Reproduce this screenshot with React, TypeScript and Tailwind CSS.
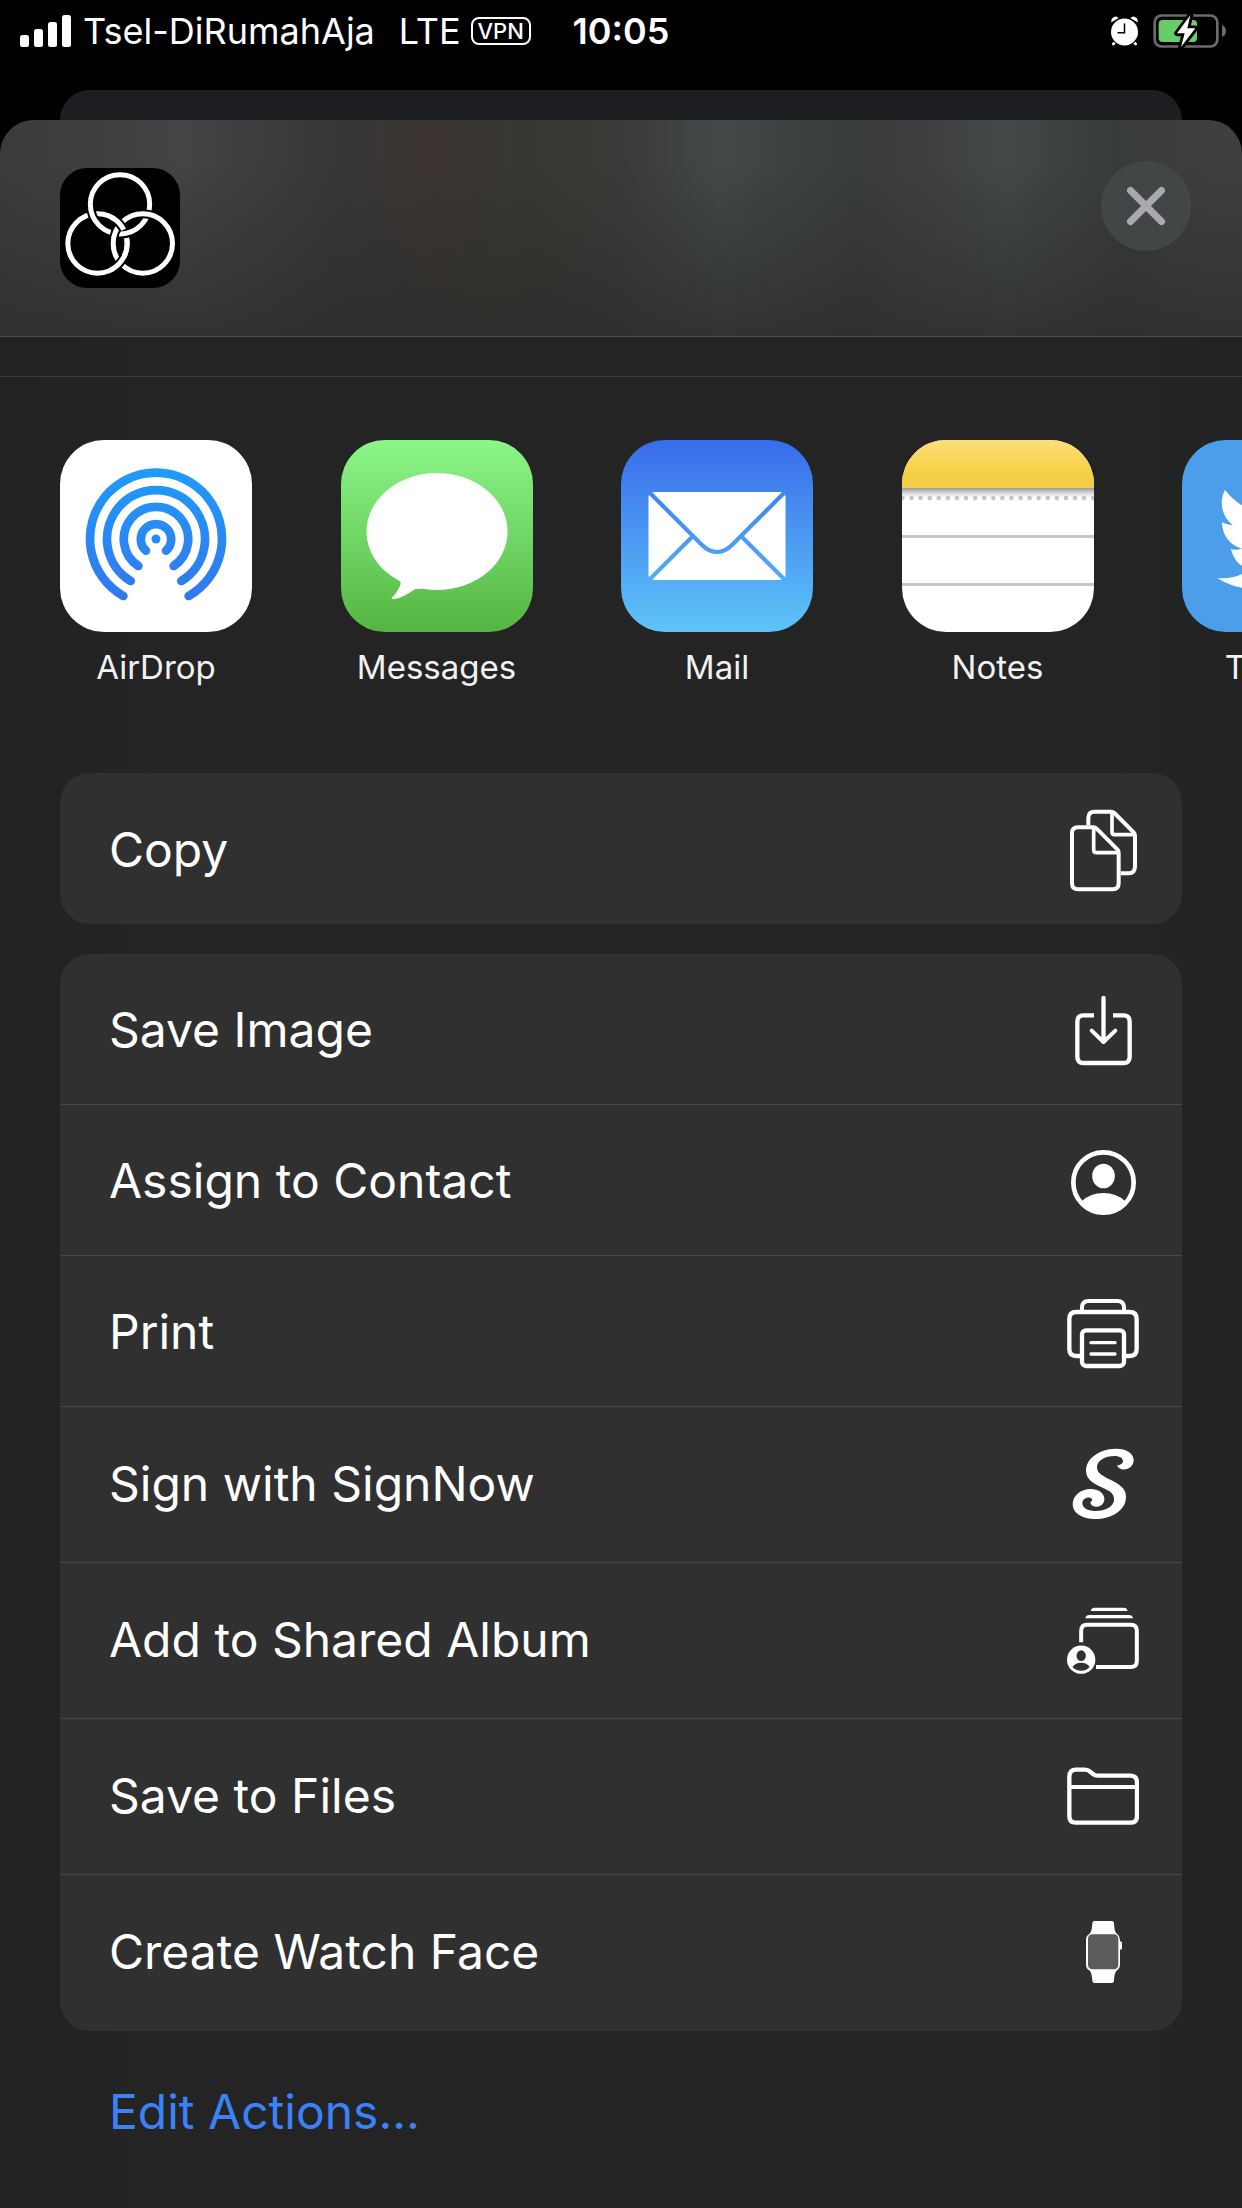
import React from "react";

type IconProps = { y: number; children: React.ReactNode };

/* Line icons share one 72×90 frame, drawn at three units per pixel. */
function ActionIcon({ y, children }: IconProps) {
  return (
    <svg
      className="h-[90px] w-[72px] shrink-0"
      viewBox={`81 ${y} 216 270`}
      fill="none"
      stroke="#fff"
      strokeWidth={12}
      strokeLinecap="round"
      strokeLinejoin="round"
      aria-hidden="true"
    >
      {children}
    </svg>
  );
}

const CopyIcon = () => (
  <ActionIcon y={43}>
    <path d="M145 104V82q0-19 19-19H213q6 0 10 4l58 58q4 4 4 10v92q0 21-19 21H242" strokeLinecap="butt" />
    <path d="M216 66v58q0 8 8 8h58" strokeWidth={11} />
    <path d="M96 128q0-18 18-18h46q6 0 10 4l62 62q4 4 4 10v92q0 18-18 18h-104q-18 0-18-18z" />
    <path d="M161 113v64q0 9 9 9h64" strokeWidth={11} />
  </ActionIcon>
);

const SaveImageIcon = () => (
  <ActionIcon y={15}>
    <path d="M162 106H131q-19 0-19 19v105q0 19 19 19h119q19 0 19-19V125q0-19-19-19H219" strokeLinecap="butt" strokeWidth={13} />
    <path d="M190.500 54V184" strokeWidth={13} />
    <path d="M155 152l35.500 34L226 152" />
  </ActionIcon>
);

const ContactIcon = () => (
  <ActionIcon y={468}>
    <circle cx="190.500" cy="607.500" r="90.500" strokeWidth={14} />
    <ellipse cx="190.500" cy="588" rx="34" ry="37" fill="#fff" stroke="none" />
    <path d="M126 663Q152 639 190.500 639T255 663Q230 700 190.500 702T126 663z" fill="#fff" stroke="none" />
  </ActionIcon>
);

const PrintIcon = () => (
  <ActionIcon y={21}>
    <path d="M126 92V83q0-20 20-20h86q20 0 20 20v9" strokeLinecap="butt" />
    <path d="M122 228h-13q-21 0-21-21v-90q0-21 21-21h160q21 0 21 21v90q0 21-21 21h-13" strokeLinecap="butt" strokeWidth={13} />
    <rect x="126" y="151" width="126" height="107" rx="12" strokeWidth={13} />
    <path d="M153 188h72M153 222h72" strokeWidth={10} />
  </ActionIcon>
);

const SignNowIcon = () => (
  <ActionIcon y={478}>
    <path
      fill="#fff"
      stroke="none"
      d="M231 557C236 568 246 571 256 569C270 567 281 556 281 541C281 520 257 506 226 507C180 508 138 535 138 573C138 602 165 613 196 628C216 638 222 645 222 660C222 680 196 694 165 694C142 694 127 684 127 671C127 659 138 652 150 654C156 655 158 659 156 663C152 664 151 668 152 672C155 679 164 682 173 681C185 679 194 670 193 656C191 639 175 628 152 628C122 628 98 648 98 674C98 702 128 718 164 718C215 718 258 692 258 651C258 624 234 612 208 599C186 588 171 580 171 563C171 543 195 529 223 529C240 529 249 536 249 545C249 552 241 557 231 557Z"
    />
  </ActionIcon>
);

const SharedAlbumIcon = () => (
  <ActionIcon y={16}>
    <path d="M152 64q2-10 12-10h87q10 0 12 10zM136 86q2-10 12-10h119q10 0 12 10z" fill="#fff" stroke="none" />
    <path d="M123.500 158V123q0-18 18-18h131q18 0 18 18v91q0 18-18 18H168" strokeLinecap="butt" />
    <circle cx="123.500" cy="210" r="42.500" fill="#fff" stroke="none" />
    <ellipse cx="123.500" cy="198" rx="14" ry="16" fill="#303030" stroke="none" />
    <path d="M97 232Q106 219 123.500 219T149 232Q140 243 123.500 243T97 232z" fill="#303030" stroke="none" />
  </ActionIcon>
);

const FolderIcon = () => (
  <ActionIcon y={484}>
    <path d="M88 562q0-22 20-22h25q9 0 16 5l10 8q6 5 14 5h98q20 0 20 20v102q0 19-19 19H107q-19 0-19-19z" strokeWidth={13} />
    <path d="M90 592H288" strokeLinecap="butt" />
  </ActionIcon>
);

const WatchIcon = () => (
  <ActionIcon y={954}>
    <g stroke="none">
      <path
        fill="#fff"
        d="M164 996h51q7 0 7 7c1 20 4 28 10 33q8 5 8 16v75q0 11-8 16c-6 5-9 14-10 32q0 7-7 7h-51q-7 0-7-7c-1-18-4-27-10-32q-9-5-9-16v-75q0-11 9-16c6-5 9-13 10-33q0-7 7-7z"
      />
      <rect x="236" y="1057" width="10" height="25" rx="5" fill="#fff" />
      <rect x="144" y="1036" width="91" height="105" rx="13" fill="#5b5b5b" />
    </g>
  </ActionIcon>
);

const appTile = "block size-48";

const AirDropArt = () => (
  <svg className={appTile} viewBox="0 0 192 192" aria-hidden="true">
    <defs>
      <linearGradient id="airdrop" gradientUnits="userSpaceOnUse" x1="0" y1="29" x2="0" y2="161">
        <stop stopColor="#1e9bf9" />
        <stop offset="1" stopColor="#3377ee" />
      </linearGradient>
    </defs>
    <rect width="192" height="192" fill="#fff" />
    <g fill="none" stroke="url(#airdrop)" strokeWidth="8.700" strokeLinecap="round">
      <path d="M63.300 156A66 66 0 1 1 128.700 156" />
      <path d="M70.700 141A49 49 0 1 1 121.300 141" />
      <path d="M78.300 126A32.200 32.200 0 1 1 113.700 126" />
      <path d="M86 110.700A15.200 15.200 0 1 1 106 110.700" />
    </g>
    <circle cx="96" cy="99" r="4.500" fill="#2989f4" />
  </svg>
);

const MessagesArt = () => (
  <svg className={appTile} viewBox="0 0 192 192" aria-hidden="true">
    <defs>
      <linearGradient id="messages" x1="0" y1="0" x2="0" y2="1">
        <stop stopColor="#8cf688" />
        <stop offset="1" stopColor="#54b642" />
      </linearGradient>
    </defs>
    <rect width="192" height="192" fill="url(#messages)" />
    <ellipse cx="96" cy="91.500" rx="70.500" ry="58.500" fill="#fff" />
    <path d="M56 138Q61 141 59 146Q56 153 50.500 158Q51 159.500 54 159Q63 157 71 151Q75 148 80 149L90 130z" fill="#fff" />
  </svg>
);

const MailArt = () => (
  <svg className={appTile} viewBox="0 0 192 192" aria-hidden="true">
    <defs>
      <linearGradient id="mail" gradientUnits="userSpaceOnUse" x1="0" y1="0" x2="0" y2="192">
        <stop stopColor="#386ceb" />
        <stop offset="1" stopColor="#5ec4f8" />
      </linearGradient>
    </defs>
    <rect width="192" height="192" fill="url(#mail)" />
    <rect x="27.500" y="52" width="137" height="88" rx="5" fill="#fff" />
    <g fill="none" stroke="url(#mail)" strokeWidth="4.200">
      <path d="M29 53L81 105Q88 112 96 112T111 105L163 53" />
      <path d="M29 139L72 96M163 139L120 96" />
    </g>
  </svg>
);

const NotesArt = () => (
  <svg className={appTile} viewBox="0 0 192 192" aria-hidden="true">
    <defs>
      <linearGradient id="notes" x1="0" y1="0" x2="0" y2="1">
        <stop stopColor="#fae07a" />
        <stop offset="0.600" stopColor="#f7d24c" />
        <stop offset="1" stopColor="#f5cb42" />
      </linearGradient>
      <linearGradient id="notes-shade" x1="0" y1="0" x2="0" y2="1">
        <stop stopColor="#9a9a9c" />
        <stop offset="0.500" stopColor="#d8d8da" />
        <stop offset="1" stopColor="#fff" />
      </linearGradient>
    </defs>
    <rect width="192" height="192" fill="#fff" />
    <rect width="192" height="48" fill="url(#notes)" />
    <rect y="48" width="192" height="10" fill="url(#notes-shade)" />
    <path d="M0.500 58H194" stroke="#c5c5ca" strokeWidth="4.600" strokeLinecap="round" strokeDasharray="0 9.080" />
    <path d="M0 96.500H192M0 144.500H192" stroke="#c5c5ca" strokeWidth="3" />
  </svg>
);

const TwitterArt = () => (
  <svg className={appTile} viewBox="0 0 192 192" aria-hidden="true">
    <rect width="192" height="192" fill="#4c9eeb" />
    <path
      fill="#fff"
      d="M43 50C56 66 74 76 95 77C91 58 104 45 120 45C128 45 134 48 139 53C145 52 150 50 155 47C153 53 149 58 144 61C149 60 153 59 158 57C155 62 151 66 146 69C147 112 115 149 73 149C59 149 46 145 35 138C48 139 60 136 69 128C59 128 52 121 49 109C52 110 56 110 60 108.500C49 106 40 96 40 82C43 84 47 85 51 85C41 78 36 63 43 50Z"
    />
  </svg>
);

/* Point on a ring of radius 89 around (cx, cy), joined into an arc. */
function arc(cx: number, cy: number, from: number, to: number) {
  const at = (deg: number) => {
    const a = (deg * Math.PI) / 180;
    return `${cx + 89 * Math.cos(a)} ${cy + 89 * Math.sin(a)}`;
  };
  return `M${at(from)}A89 89 0 0 1 ${at(to)}`;
}

const RingsLogo = () => (
  <svg className="block size-[120px] rounded-[27px]" viewBox="60 54 360 360" role="img" aria-label="Shared item">
    <rect x="60" y="54" width="360" height="360" fill="#000" />
    <g fill="none">
      <circle cx="172.500" cy="280.500" r="89" stroke="#fff" strokeWidth="15" />
      <circle cx="240" cy="163" r="89" stroke="#000" strokeWidth="27" />
      <circle cx="240" cy="163" r="89" stroke="#fff" strokeWidth="15" />
      <circle cx="308.500" cy="280.500" r="89" stroke="#000" strokeWidth="27" />
      <circle cx="308.500" cy="280.500" r="89" stroke="#fff" strokeWidth="15" />
      <path d={arc(172.5, 280.5, -56, -28)} stroke="#000" strokeWidth="27" />
      <path d={arc(172.5, 280.5, 26, 58)} stroke="#000" strokeWidth="27" />
      <path d={arc(172.5, 280.5, -62, -28)} stroke="#fff" strokeWidth="15" />
      <path d={arc(172.5, 280.5, -8, 62)} stroke="#fff" strokeWidth="15" />
    </g>
  </svg>
);

const apps = [
  { name: "AirDrop", Art: AirDropArt },
  { name: "Messages", Art: MessagesArt },
  { name: "Mail", Art: MailArt },
  { name: "Notes", Art: NotesArt },
  { name: "Twitter", Art: TwitterArt },
];

const shortRow = "h-[151px] pt-0.5";
const tallRow = "h-[156px] pb-0.5";

const actions = [
  { label: "Save Image", Icon: SaveImageIcon, row: shortRow },
  { label: "Assign to Contact", Icon: ContactIcon, row: shortRow },
  { label: "Print", Icon: PrintIcon, row: shortRow },
  { label: "Sign with SignNow", Icon: SignNowIcon, row: tallRow },
  { label: "Add to Shared Album", Icon: SharedAlbumIcon, row: tallRow },
  { label: "Save to Files", Icon: FolderIcon, row: tallRow },
  { label: "Create Watch Face", Icon: WatchIcon, row: tallRow },
];

function ActionRow({ label, Icon, row }: { label: string; Icon: () => React.ReactElement; row: string }) {
  return (
    <button
      type="button"
      className={`flex w-full items-center justify-between border-b border-[#474847] pr-[43px] pl-[49px] text-left last:border-b-0 ${row}`}
    >
      <span>{label}</span>
      <Icon />
    </button>
  );
}

function StatusBar() {
  return (
    <div className="grid h-[90px] grid-cols-[1fr_auto_1fr] items-start pt-2 text-[36px] leading-[46px]">
      <div className="flex h-[46px] items-center pl-5">
        <svg className="h-8 w-[51px]" viewBox="0 0 51 32" fill="#fff" role="img" aria-label="Signal strength">
          <rect y="20" width="9" height="12" rx="2.500" />
          <rect x="14" y="14" width="9" height="18" rx="2.500" />
          <rect x="28" y="7" width="9" height="25" rx="2.500" />
          <rect x="42" width="9" height="32" rx="2.500" />
        </svg>
        <span className="ml-3">Tsel-DiRumahAja</span>
        <span className="ml-6">LTE</span>
        <span className="ml-2.5 flex h-7 w-[60px] items-center justify-center rounded-lg border-2 border-white text-[22px] leading-none font-medium">
          VPN
        </span>
      </div>
      <time className="font-semibold">10:05</time>
      <div className="flex h-[46px] items-center justify-end gap-[15px] pr-4">
        <svg className="h-[30px] w-[27px]" viewBox="207 47 81 90" role="img" aria-label="Alarm set">
          <g stroke="#fff" strokeWidth="8" strokeLinecap="round">
            <path d="M223 122l-9 9M272 122l9 9" />
          </g>
          <path d="M208 66q-2-12 8-16 8-4 14 4zM287 66q2-12-8-16-8-4-14 4z" fill="#fff" />
          <circle cx="247.500" cy="95" r="44" fill="#000" />
          <circle cx="247.500" cy="95" r="40.500" fill="#fff" />
          <path d="M247.500 71V97H228" fill="none" stroke="#000" strokeWidth="4.500" strokeLinecap="round" />
        </svg>
        <svg className="h-[34px] w-[73px]" viewBox="333 39 219 102" role="img" aria-label="Battery charging">
          <rect x="338" y="43.500" width="188" height="93" rx="21" fill="none" stroke="#6b6b6b" strokeWidth="8" />
          <path d="M540 72q12 5 12 18t-12 18z" fill="#6b6b6b" />
          <rect x="350" y="57" width="115" height="66" rx="12" fill="#67ce67" />
          <path d="M445 43L405 97H428L417 138L460 82H436Z" fill="#fff" stroke="#000" strokeWidth="17" paintOrder="stroke" strokeLinejoin="round" />
        </svg>
      </div>
    </div>
  );
}

export default function App() {
  return (
    <div className="flex min-h-screen w-full flex-col overflow-hidden bg-black font-[Inter,'Liberation_Sans',sans-serif] text-white">
      <StatusBar />
      <div className="mx-[60px] h-[30px] rounded-t-[30px] bg-[#1d1e22]" />

      <main className="flex grow flex-col overflow-hidden rounded-t-[34px] bg-[linear-gradient(90deg,#202221,#242424_12%,#242424_90%,#212323)]">
        <header className="border-b border-[#4a4c4b] bg-[linear-gradient(180deg,transparent_20%,#2d2e2dcc),linear-gradient(90deg,#3b3b3b,#444345_15%,#363637_27%,#3b3430_35%,#363730_43%,#393b38_50%,#434849_58%,#383c3a_69%,#3f3f41_74%,#434849_81%,#383c38_90%,#3f3e40_98%)]">
          <div className="flex h-[216px] items-start justify-between pr-[51px] pl-[60px]">
            <div className="pt-12">
              <RingsLogo />
            </div>
            <div className="pt-[41px]">
              <button type="button" aria-label="Close" className="flex size-[90px] items-center justify-center rounded-full bg-[#434647]">
                <svg className="size-10" viewBox="0 0 40 40" stroke="#a9a9af" strokeWidth="7" strokeLinecap="round" aria-hidden="true">
                  <path d="M4.500 4.500L35.500 35.500M35.500 4.500L4.500 35.500" />
                </svg>
              </button>
            </div>
          </div>
        </header>

        <div className="h-10 border-b border-[#3c3d3c]" />

        <nav aria-label="Share with" className="grid auto-cols-[25%] grid-flow-col px-[60px] pt-[63px]">
          {apps.map(({ name, Art }) => (
            <button key={name} type="button" className="flex w-48 flex-col items-center gap-3 text-[33px] leading-[46px] text-[#f2f2f2]">
              <span className="block overflow-hidden rounded-[44px]">
                <Art />
              </span>
              <span>{name}</span>
            </button>
          ))}
        </nav>

        <div className="mx-[60px] mt-[83px] flex flex-col gap-[30px] text-[48px] leading-[60px]">
          <section className="overflow-hidden rounded-[30px] bg-[#303030]">
            <ActionRow label="Copy" Icon={CopyIcon} row={shortRow} />
          </section>
          <section className="overflow-hidden rounded-[30px] bg-[#303030]">
            {actions.map((action) => (
              <ActionRow key={action.label} {...action} />
            ))}
          </section>
        </div>

        <div className="px-[109px] pt-[51px] pb-12 text-[48px] leading-[60px]">
          <button type="button" className="text-[#3a82f7]">
            Edit Actions...
          </button>
        </div>
      </main>
    </div>
  );
}
